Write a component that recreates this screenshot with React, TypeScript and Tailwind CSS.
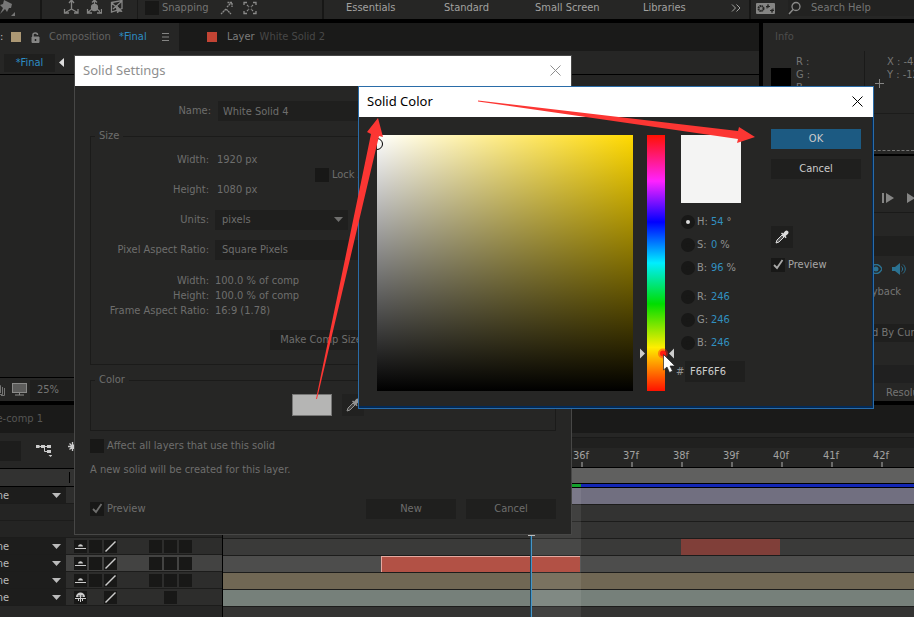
import type { ReactNode } from "react";

const UI_FONT = "font-['DejaVu_Sans_Condensed','DejaVu_Sans',sans-serif]";
const TITLE_FONT = "font-['Noto_Sans','Open_Sans',sans-serif]";

function Eyedropper() {
  return (
    <svg viewBox="0 0 14 14" className="h-3.5 w-3.5" aria-hidden="true">
      <path d="M1 13l1-3 5-5 2 2-5 5z" fill="#555" stroke="#ddd" strokeWidth="1" />
      <path d="M6 3.5l1-1 1.2 1L10 1.2C11 .3 12.300 .5 13 1.200c.7.7.8 1.900-.1 2.800L10.600 6l1 1.200-1 1z" fill="#ddd" />
    </svg>
  );
}

function CloseIcon({ color }: { color: string }) {
  return (
    <svg viewBox="0 0 11 11" className="h-[11px] w-[11px]" aria-hidden="true">
      <path d="M.5.5l10 10M10.500.5l-10 10" stroke={color} strokeWidth="1" fill="none" />
    </svg>
  );
}

function Check({ id, checked = false, label }: { id: string; checked?: boolean; label: string }) {
  return (
    <div className="flex items-center">
      <span className="relative flex h-3.5 w-3.5 shrink-0">
        <input
          id={id}
          type="checkbox"
          defaultChecked={checked}
          className="peer h-3.5 w-3.5 appearance-none bg-[#181817]"
        />
        <svg
          viewBox="0 0 14 14"
          className="pointer-events-none absolute inset-0 hidden h-3.5 w-3.5 peer-checked:block"
          aria-hidden="true"
        >
          <path d="M3 7l3 3 5.500-8" fill="none" stroke="currentColor" strokeWidth="1.800" />
        </svg>
      </span>
      <label htmlFor={id} className="ml-[3px] whitespace-nowrap">
        {label}
      </label>
    </div>
  );
}

function TopBar() {
  const spaces = [
    ["Essentials", "w-[98px]"],
    ["Standard", "w-[91px]"],
    ["Small Screen", "w-[108px]"],
    ["Libraries", "w-[88px]"],
  ];
  return (
    <header className="flex h-[19px] shrink-0 overflow-hidden bg-[#262625] text-[#a2a2a0]">
      <div className="flex w-[324px] shrink-0 border-r-2 border-[#171716]">
        <div className="w-[42px] shrink-0 border-r-2 border-[#171716]">
          <svg viewBox="0 0 16 16" className="h-4 w-4" aria-hidden="true">
            <path d="M4 0l8 4-1 4-2 0-2 4-2-3-5 5 3-6-3-3 3-1z" fill="#777" />
            <path d="M15 12v4h-4z" fill="#777" />
          </svg>
        </div>
        <div className="flex w-24 shrink-0 gap-[7px] border-r border-[#1a1a19] pl-[21px]">
          <svg viewBox="0 0 16 16" className="h-4 w-4 shrink-0" fill="none" stroke="#858584" strokeWidth="1.300" aria-hidden="true">
            <path d="M8.500 1v8l-6 3.500M8.500 9l6 3.500M6 3l2.500-3L11 3M1.500 9v4H6M15 9v4h-4" />
          </svg>
          <svg viewBox="0 0 16 16" className="h-4 w-4 shrink-0" fill="none" stroke="#858584" strokeWidth="1.300" aria-hidden="true">
            <path d="M8.500 0v5M6 9l-4 3.500M11 9l4 3.500M6 2.500L8.500 0 11 2.500M1.500 9v4H6M15.500 9v4H11" />
            <circle cx="8.500" cy="7.500" r="3" fill="#858584" />
          </svg>
          <svg viewBox="0 0 16 16" className="h-4 w-4 shrink-0" fill="none" stroke="#858584" aria-hidden="true">
            <path d="M2.500 2.500L13 .500v8L2.500 12zM3 3l8 8M13 1L4 9" strokeWidth="1.300" />
            <path d="M7 5l6 6.500-3-.500-1.500 2z" fill="#858584" />
          </svg>
        </div>
        <div className="flex h-4 items-center pl-[7px] text-[#757574]">
          <Check id="snapping" label="Snapping" />
          <svg viewBox="0 0 14 14" className="ml-2.5 h-3.5 w-3.5" fill="none" stroke="#8b8b8a" aria-hidden="true">
            <path d="M2 13l5-5 5 5M8 6l4-4M8.500 1.500H13V6" strokeDasharray="2 .5" strokeWidth="1.300" />
          </svg>
          <svg viewBox="0 0 14 14" className="ml-2.5 h-3.5 w-3.5" fill="none" stroke="#8b8b8a" aria-hidden="true">
            <path d="M1 4V1.500h3M10 1.500h3V4M1 10v2.500h3M10 12.500h3V10" strokeWidth="1.300" />
            <path d="M4 4l2 2M10 4L8 6M4 10l2-2M10 10L8 8" strokeDasharray="1.500 .5" strokeWidth="1.300" />
          </svg>
        </div>
      </div>
      <nav className="flex h-4 min-w-0 flex-1 items-center pl-[22px]">
        {spaces.map(([name, width]) => (
          <button key={name} className={`${width} shrink-0 whitespace-nowrap text-left`}>
            {name}
          </button>
        ))}
        <svg viewBox="0 0 10 8" className="h-2 w-2.5" fill="none" stroke="#a2a2a0" aria-hidden="true">
          <path d="M1 .5L4.500 4 1 7.500M5.500.5L9 4 5.500 7.500" />
        </svg>
      </nav>
      <div className="flex h-[19px] w-[165px] shrink-0 items-center border-l-2 border-[#171716] pl-[5px]">
        <svg viewBox="0 0 19 11" className="-mt-[3px] h-[11px] w-[19px] shrink-0" aria-hidden="true">
          <rect width="19" height="11" rx="1" fill="#858584" />
          <circle cx="5" cy="5.500" r="2.500" fill="none" stroke="#262625" strokeWidth="2" strokeDasharray="1.500 .5" />
          <path d="M11 5.500V3h2M17 5.500V8h-2M10 3.500h4M14 7.500h4M12 1v4M16 6v4" stroke="#262625" fill="none" />
        </svg>
        <div className="ml-[13px] flex h-4 flex-1 items-center self-start bg-[#222221]">
          <svg viewBox="0 0 14 14" className="h-3.5 w-3.5 shrink-0" fill="none" stroke="#8b8b8a" aria-hidden="true">
            <circle cx="8" cy="5.500" r="4" strokeWidth="1.300" />
            <path d="M5 8.500l-4 4.500" strokeWidth="1.500" />
          </svg>
          <input
            aria-label="Search Help"
            placeholder="Search Help"
            className="ml-[9px] w-full min-w-0 bg-transparent outline-none placeholder:text-[#757574]"
          />
        </div>
      </div>
    </header>
  );
}

function CompositionPanel() {
  return (
    <section className="flex min-w-0 flex-1 flex-col bg-[#262625]">
      <div className="flex h-7 shrink-0 bg-[#1a1a19]">
        <div className="flex w-[179px] shrink-0 items-center bg-[#262625]">
          <span className="w-[11px] text-[#bbb]">:</span>
          <span className="h-2.5 w-2.5 bg-[#ac9874]" />
          <svg viewBox="0 0 10 11" className="ml-2.5 h-[11px] w-2.5" fill="none" stroke="#858584" aria-hidden="true">
            <path d="M2 5V2.500C2 .5 6.500.5 6.500 3" strokeWidth="1.500" />
            <path d="M1 5h7v5.500H1z" fill="#858584" />
            <path d="M4.500 7v2" stroke="#222" strokeWidth="1.500" />
          </svg>
          <span className="ml-2 w-[66px] text-[#636362]">Composition</span>
          <span className="ml-1 text-[#2d8cc4]">*Final</span>
          <svg viewBox="0 0 7 8" className="ml-[15px] h-2 w-[7px]" stroke="#858584" aria-hidden="true">
            <path d="M0 .5h7M0 4h7M0 7.500h7" />
          </svg>
        </div>
        <div className="flex items-center pl-7">
          <span className="h-2.5 w-2.5 bg-[#c34434]" />
          <span className="ml-2.5 text-[#7c7c7b]">Layer</span>
          <span className="ml-[5px] text-[#484847]">White Solid 2</span>
        </div>
      </div>
      <div className="flex h-6 shrink-0 items-center border-b border-black pl-1">
        <button className="h-[18px] w-[51px] bg-[#1f1f1e] text-[#2d8cc4]">*Final</button>
        <svg viewBox="0 0 5 9" className="ml-1 h-[9px] w-[5px]" fill="#ddd" aria-hidden="true">
          <path d="M5 0v9L0 4.500z" />
        </svg>
      </div>
      <div className="flex-1 bg-[#242423]" />
      <div className="flex h-6 shrink-0 items-center border-t border-black">
        <svg viewBox="0 0 5 12" className="h-3 w-[5px]" fill="none" stroke="#757574" aria-hidden="true">
          <path d="M0 1.500h.5V9M2.500 3v7.500H0M4.500 4v7.500H1" />
        </svg>
        <svg viewBox="0 0 15 13" className="ml-[7px] h-[13px] w-[15px]" aria-hidden="true">
          <rect x=".5" y=".5" width="14" height="9" fill="#5d5d5c" stroke="#8b8b8a" />
          <path d="M3 12h9M7.500 10v2" stroke="#8b8b8a" />
        </svg>
        <button className="ml-[3px] h-5 flex-1 bg-[#1f1f1e] pl-[7px] text-left text-[#757574]">25%</button>
      </div>
    </section>
  );
}

function SidePanels() {
  return (
    <aside className="flex w-[151px] shrink-0 flex-col overflow-hidden bg-[#262625] text-[#757574]">
      <div className="flex h-[131px] shrink-0 flex-col">
        <div className="flex h-7 items-center pl-3 text-[#4d4d4c]">Info</div>
        <div className="flex h-[63px] border-b border-[#1c1c1b]">
          <div className="ml-2 mt-[17px] h-5 w-5 shrink-0 bg-black" />
          <div className="ml-[5px] w-[69px] shrink-0 border-r border-[#1a1a19] pt-1 leading-[13px]">
            <p>R :</p>
            <p>G :</p>
            <p>B :</p>
          </div>
          <svg viewBox="0 0 9 9" className="ml-2.5 mt-7 h-[9px] w-[9px] shrink-0" stroke="#858584" aria-hidden="true">
            <path d="M4.500 0v9M0 4.500h9" />
          </svg>
          <div className="ml-[3px] shrink-0 pt-1 leading-[13px]">
            <p>X : -42</p>
            <p>Y : -12</p>
          </div>
        </div>
        <div className="mt-9 ml-[110px] border-t border-dashed border-[#757574]" />
      </div>
      <div className="flex h-[59px] shrink-0 items-center gap-3 border-b border-t-2 border-[#1a1a19] border-t-black pl-[119px] pt-7">
        <svg viewBox="0 0 12 10" className="h-2.5 w-3 shrink-0" fill="#858584" aria-hidden="true">
          <path d="M0 0h2v10H0zM4 0l8 5-8 5z" />
        </svg>
        <svg viewBox="0 0 12 10" className="h-2.5 w-3 shrink-0" fill="#858584" aria-hidden="true">
          <path d="M1 0l8 5-8 5zM10 0h2v10h-2z" />
        </svg>
      </div>
      <div className="mt-[23px] h-5 shrink-0 bg-[#1f1f1e]" />
      <div className="mt-1.5 flex h-[14px] shrink-0 items-center gap-2.5 pl-[107px] text-[#2b7292]">
        <svg viewBox="0 0 12 10" className="h-2.5 w-3" aria-hidden="true">
          <path d="M0 5c3-6 9-6 12 0-3 6-9 6-12 0z" fill="none" stroke="currentColor" strokeWidth="1.500" />
          <circle cx="6" cy="5" r="2.500" fill="currentColor" />
        </svg>
        <svg viewBox="0 0 14 12" className="h-3 w-3.5" aria-hidden="true">
          <path d="M0 4h3l5-4v12L3 8H0z" fill="currentColor" />
          <path d="M9.500 3.500c1.500 1.500 1.500 3.500 0 5M11 1.500c3 2.500 3 6.500 0 9" fill="none" stroke="currentColor" />
        </svg>
      </div>
      <p className="mt-2 h-4 shrink-0 whitespace-nowrap pl-[60px] leading-4">Cache Playback</p>
      <button className="mt-6 h-[18px] shrink-0 overflow-hidden whitespace-nowrap bg-[#1f1f1e] pl-[74px] text-left">
        Affected By Current
      </button>
      <div className="mt-[23px] h-[18px] shrink-0 bg-[#202020]" />
      <p className="flex-1 overflow-hidden whitespace-nowrap pl-[123px] leading-[20px]">Resolution</p>
    </aside>
  );
}

function DownTriangle() {
  return (
    <svg viewBox="0 0 9 5" className="h-[5px] w-[9px] shrink-0" fill="currentColor" aria-hidden="true">
      <path d="M0 0h9L4.500 5z" />
    </svg>
  );
}

function Cell({ children }: { children?: ReactNode }) {
  return <span className="flex h-[13px] w-[13px] items-center justify-center bg-[#181817]">{children}</span>;
}

function Slash() {
  return (
    <svg viewBox="0 0 13 13" className="h-[13px] w-[13px]" aria-hidden="true">
      <path d="M1.500 11.500l10-10" stroke="#ccc" strokeWidth="1.500" />
    </svg>
  );
}

function Shy() {
  return (
    <svg viewBox="0 0 11 7" className="h-[7px] w-[11px]" aria-hidden="true">
      <path d="M3 3.500C3.500.5 7.500.5 8 3.500z" fill="#ccc" />
      <path d="M0 5.500h11" stroke="#ccc" />
    </svg>
  );
}

function ShyOpen() {
  return (
    <svg viewBox="0 0 11 10" className="h-2.5 w-[11px]" aria-hidden="true">
      <path d="M1 5c0-6 9-6 9 0z" fill="#ccc" />
      <path d="M0 6.500h11M5.500 2v8M3.500 6v3M7.500 6v3" stroke="#ccc" />
      <path d="M4 3v2M7 3v2" stroke="#222" />
    </svg>
  );
}

type LayerKind = "dropdown" | "blank" | "full" | "selected" | "camera";

function LayerControls({ kind }: { kind: LayerKind }) {
  if (kind === "blank") {
    return <div className="h-[17px] shrink-0 border-b border-[#1c1c1b] bg-[#242423]" />;
  }
  const bg = kind === "selected" ? "bg-[#434342]" : "bg-[#2d2d2c]";
  return (
    <div className={`flex h-[17px] shrink-0 border-b border-[#1c1c1b] ${bg}`}>
      <button className="flex w-[66px] shrink-0 items-center justify-between bg-[#1d1d1c] pr-[5px] pt-px text-[#bbb]">
        <span className="flex w-[9px] justify-end overflow-hidden">
          <span>None</span>
        </span>
        <DownTriangle />
      </button>
      {kind !== "dropdown" && (
        <div className="flex items-center pl-2">
          <Cell>{kind === "camera" ? <ShyOpen /> : <Shy />}</Cell>
          <span className={kind === "camera" ? "ml-0.5 w-[13px]" : "ml-0.5"}>{kind !== "camera" && <Cell />}</span>
          <span className="ml-0.5">
            <Cell>
              <Slash />
            </Cell>
          </span>
          {kind === "camera" ? (
            <span className="ml-[47px]">
              <Cell />
            </span>
          ) : (
            <span className="ml-8 flex gap-0.5">
              <Cell />
              <Cell />
              <Cell />
            </span>
          )}
        </div>
      )}
    </div>
  );
}

function Timeline() {
  const frames = ["30f", "31f", "32f", "33f", "34f", "35f", "36f", "37f", "38f", "39f", "40f", "41f", "42f"];
  const line = "h-[17px] shrink-0 border-b border-[#1c1c1b]";
  return (
    <section className="isolate flex min-h-0 flex-1 flex-col bg-[#262625]">
      <div className="flex h-7 shrink-0 items-center bg-[#1a1a19] text-[#555554]">
        <span className="flex w-[43px] justify-end overflow-hidden whitespace-nowrap">Pre-comp 1</span>
      </div>
      <div className="flex min-h-0 flex-1">
        <div className="flex w-[223px] shrink-0 flex-col border-r border-black">
          <div className="flex h-9 shrink-0 items-center border-b border-black">
            <input aria-label="Search layers" className="h-5 w-[21px] bg-[#1d1d1c]" />
            <svg viewBox="0 0 16 13" className="ml-[15px] h-[13px] w-4" fill="#ccc" aria-hidden="true">
              <path d="M0 1h3.500v3H0zM5 1h4v3H5zM11 1h4v3h-4zM11 6h4v3h-4zM12.500 11h4l-2 2z" />
              <path d="M3 2.500h9M8.500 3v4.500H12" stroke="#ccc" fill="none" />
            </svg>
            <svg viewBox="0 0 9 9" className="-mt-2 ml-4 h-[9px] w-[9px]" stroke="#ccc" strokeWidth="1.300" aria-hidden="true">
              <path d="M4.500 0v9M0 4.500h9M1.500 1.500l6 6M7.500 1.500l-6 6" />
            </svg>
          </div>
          <div className="flex h-[18px] shrink-0 items-center border-b border-black bg-[#323231]">
            <span className="ml-[69px] h-[11px] border-l border-black" />
          </div>
          <LayerControls kind="dropdown" />
          <LayerControls kind="blank" />
          <LayerControls kind="blank" />
          <LayerControls kind="full" />
          <LayerControls kind="selected" />
          <LayerControls kind="full" />
          <LayerControls kind="camera" />
        </div>
        <div className="relative flex min-w-0 flex-1 flex-col overflow-hidden bg-[#333332]">
          <div className="h-[5px] shrink-0 border-b border-[#1a1a19] bg-[#262625]" />
          <div className="h-2.5 shrink-0 bg-[#20201f]" />
          <div className="flex h-5 shrink-0 border-b border-black bg-[#262625] pl-[33px] text-[#a2a2a0]">
            {frames.map((f) => (
              <div key={f} className="flex w-[50px] shrink-0 flex-col items-center">
                <span className="h-3.5 leading-[15px]">{f}</span>
                <span className="ml-0.5 h-[5px] w-0.5 bg-[#6b6b6a]" />
              </div>
            ))}
          </div>
          <div className="h-[15px] shrink-0 bg-[#60605f]" />
          <div className="flex h-[5px] shrink-0 border-y border-black">
            <span className="w-[358px] bg-[#14a02c]" />
            <span className="flex-1 bg-[#1226b5]" />
          </div>
          <div className={`${line} bg-[#716f80]`} />
          <div className={`${line} bg-[#333332]`} />
          <div className={`${line} bg-[#333332]`} />
          <div className={`${line} bg-[#3a3a39] pl-[458px]`}>
            <div className="h-4 w-[99px] bg-[#803f39]" />
          </div>
          <div className={`${line} bg-[#4d4d4c] pl-[158px]`}>
            <div className="relative z-10 h-4 w-[199px] border-l border-t border-[#e5a9a0] bg-[#b25145]" />
          </div>
          <div className={`${line} bg-[#706754]`} />
          <div className={`${line} bg-[#76807a]`} />
          <div className="pointer-events-none absolute bottom-0 left-[309px] top-[55px] w-[49px] bg-white/[0.07]" />
          <div className="pointer-events-none absolute bottom-0 left-[307px] top-4 z-20 w-0.5 border-l border-[#1c4864] bg-[#4596c8]" />
          <div className="pointer-events-none absolute left-[305px] top-[102px] z-20 h-px w-[7px] bg-[#bbb]" />
        </div>
      </div>
    </section>
  );
}

function SolidSettings() {
  const select = "h-5 w-full appearance-none bg-[#1f1f1e] pl-[7px]";
  const plain = "w-full bg-transparent pl-0.5 outline-none";
  return (
    <div
      role="dialog"
      aria-label="Solid Settings"
      className="absolute left-[74px] top-[55px] w-[498px] border border-[#474746] bg-[#262625] text-[#6e6e6d]"
    >
      <div className="flex h-[30px] items-center justify-between bg-white pb-0.5 pl-2 pr-2.5">
        <h2 className={`${TITLE_FONT} text-[13px] text-[#8f8f8f]`}>Solid Settings</h2>
        <button aria-label="Close">
          <CloseIcon color="#8f8f8f" />
        </button>
      </div>
      <div className="px-[15px] pb-[15px] pt-[15px]">
        <div className="flex items-center">
          <label htmlFor="name" className="w-[121px] text-right">
            Name:
          </label>
          <input id="name" defaultValue="White Solid 4" className="ml-[7px] h-5 min-w-0 flex-1 bg-[#1f1f1e] px-[5px] outline-none" />
        </div>
        <fieldset className="mt-2 border border-[#1b1b1a] pb-3.5">
          <legend className="ml-1 h-3.5 px-1 leading-[14px]">Size</legend>
          <div className="mt-0.5 grid grid-cols-[118px_133px_1fr] auto-rows-[30px] items-center gap-x-[6px]">
            <label htmlFor="width" className="col-start-1 text-right">
              Width:
            </label>
            <div className="flex">
              <input id="width" defaultValue="1920 px" className={plain} />
            </div>
            <label htmlFor="height" className="col-start-1 text-right">
              Height:
            </label>
            <div className="flex">
              <input id="height" defaultValue="1080 px" className={plain} />
            </div>
            <div className="col-start-3 row-span-2 row-start-1 -ml-[39px]">
              <Check id="lock" label="Lock Aspect Ratio" />
            </div>
            <label htmlFor="units" className="col-start-1 text-right">
              Units:
            </label>
            <div className="relative">
              <select id="units" className={select}>
                <option>pixels</option>
              </select>
              <span className="pointer-events-none absolute right-[5px] top-[7px]">
                <DownTriangle />
              </span>
            </div>
            <label htmlFor="par" className="col-start-1 whitespace-nowrap text-right">
              Pixel Aspect Ratio:
            </label>
            <div className="col-span-2 w-[240px]">
              <select id="par" className={select}>
                <option>Square Pixels</option>
              </select>
            </div>
          </div>
          <dl className="mt-2 grid grid-cols-[118px_1fr] gap-x-[6px] leading-[15px]">
            <dt className="text-right">Width:</dt>
            <dd>100.0 % of comp</dd>
            <dt className="text-right">Height:</dt>
            <dd>100.0 % of comp</dd>
            <dt className="whitespace-nowrap text-right">Frame Aspect Ratio:</dt>
            <dd>16:9 (1.78)</dd>
          </dl>
          <button className="ml-[179px] mt-3 block h-5 w-[102px] bg-[#1f1f1e]">Make Comp Size</button>
        </fieldset>
        <fieldset className="mt-2 border border-[#1b1b1a] pb-3.5">
          <legend className="ml-1 h-3.5 px-1 leading-[14px]">Color</legend>
          <div className="flex gap-2.5 pl-[201px] pt-[7px]">
            <button aria-label="Solid color" className="h-[22px] w-10 border border-[#777776] bg-[#b5b5b4]" />
            <button aria-label="Pick color" className="flex h-[22px] w-[22px] items-center justify-center bg-[#1f1f1e] opacity-60">
              <Eyedropper />
            </button>
          </div>
        </fieldset>
        <div className="mt-[7px]">
          <Check id="affect" label="Affect all layers that use this solid" />
        </div>
        <p className="mt-2 leading-4">A new solid will be created for this layer.</p>
        <div className="mt-[21px] flex items-center">
          <Check id="preview-settings" checked label="Preview" />
          <button className="ml-auto h-5 w-[90px] bg-[#1f1f1e]">New</button>
          <button className="ml-2.5 h-5 w-[90px] bg-[#1f1f1e]">Cancel</button>
        </div>
      </div>
    </div>
  );
}

function Channel({ name, value, unit, checked = false }: { name: string; value: string; unit?: string; checked?: boolean }) {
  const id = `channel-${name}-${unit ?? "rgb"}`;
  return (
    <div className="flex h-[23px] items-center pl-[5px]">
      <input
        id={id}
        type="radio"
        name="channel"
        defaultChecked={checked}
        className="h-3.5 w-3.5 appearance-none rounded-full border-[5px] border-[#181817] bg-[#181817] checked:bg-[#ddd]"
      />
      <label htmlFor={id} className="ml-0.5 w-3.5">
        {name}:
      </label>
      <span className="text-[#3190c0]">{value}</span>
      <span className="ml-[3px]">{unit}</span>
    </div>
  );
}

function SolidColor() {
  return (
    <div
      role="dialog"
      aria-label="Solid Color"
      className="absolute left-[358px] top-[86px] w-[516px] border border-[#2a6ca8] bg-[#262625] text-[#929291]"
    >
      <div className="flex h-[30px] items-center justify-between bg-white pb-0.5 pl-2 pr-2.5">
        <h2 className={`${TITLE_FONT} text-[13px] text-black`}>Solid Color</h2>
        <button aria-label="Close">
          <CloseIcon color="#000000" />
        </button>
      </div>
      <div className="flex border-b-2 border-r border-[#022a58] pb-[15px] pl-[18px] pr-[11px] pt-3">
        <div className="relative mt-1.5 h-64 w-64 overflow-hidden bg-[linear-gradient(to_top,#000,transparent),linear-gradient(to_right,#fff,#ffd900)]">
          <span className="absolute -left-1.5 top-[3px] h-3 w-3 rounded-full border border-black" />
        </div>
        <div className="relative ml-3.5 mt-1.5 h-64 w-[18px] bg-[linear-gradient(to_bottom,#f10,#f2f_18%,#00f_34%,#0ef_50%,#0d0_66%,#fe0_83%,#f10)]">
          <svg viewBox="0 0 40 24" className="absolute -left-2 top-[210px] h-6 w-10" aria-hidden="true">
            <path d="M1 3.500v10l5-5zM35 3.500v10l-5-5z" fill="#ccc" />
            <circle cx="24" cy="8.500" r="5" fill="#ff2010" opacity=".45" />
            <circle cx="24" cy="8.500" r="3" fill="#ff1c10" />
          </svg>
        </div>
        <div className="ml-[11px] w-[95px]">
          <div className="ml-[5px] mt-1.5 h-[68px] w-[60px] bg-[#f4f4f3]" />
          <div className="mt-[7px]">
            <Channel name="H" value="54" unit="°" checked />
            <Channel name="S" value="0" unit="%" />
            <Channel name="B" value="96" unit="%" />
          </div>
          <div className="mt-1.5">
            <Channel name="R" value="246" />
            <Channel name="G" value="246" />
            <Channel name="B" value="246" />
          </div>
          <div className="mt-[7px] flex items-center">
            <label htmlFor="hex" className="w-[9px]">
              #
            </label>
            <input id="hex" defaultValue="F6F6F6" className="h-[21px] w-[60px] bg-[#1f1f1e] pl-[5px] text-[#ccc] outline-none" />
          </div>
        </div>
        <div className="w-[90px]">
          <button className="block h-5 w-full bg-[#1c5a82] text-[#ccc]">OK</button>
          <button className="mt-2.5 block h-5 w-full bg-[#1f1f1e] text-[#ccc]">Cancel</button>
          <button aria-label="Pick color" className="mt-[47px] flex h-[22px] w-[22px] items-center justify-center bg-[#1f1f1e]">
            <Eyedropper />
          </button>
          <div className="mt-[9px] text-[#a8a8a7]">
            <Check id="preview-color" checked label="Preview" />
          </div>
        </div>
      </div>
    </div>
  );
}

function Annotations() {
  return (
    <svg viewBox="0 0 914 617" className="pointer-events-none absolute left-0 top-0 h-[617px] w-[914px]" aria-hidden="true">
      <g fill="#fc3633">
        <path d="M316 399L371 134l-4-2 11-14 5 19-4-1-62 263z" />
        <path d="M478 100.500l260 30.500 1-4 16 10-18 6 1-4-260-37.500z" />
      </g>
      <path d="M663.500 354.500v15.500l3.500-3 2.500 5.500 3-1.500-2.500-5h5z" fill="#fff" stroke="#222" strokeWidth=".7" />
    </svg>
  );
}

export default function App() {
  return (
    <div className={`relative flex h-screen flex-col overflow-hidden bg-black text-[11px] leading-4 ${UI_FONT}`}>
      <TopBar />
      <main className="mt-1 flex h-[378px] shrink-0 gap-1">
        <CompositionPanel />
        <SidePanels />
      </main>
      <div className="h-1 shrink-0" />
      <Timeline />
      <SolidSettings />
      <SolidColor />
      <Annotations />
    </div>
  );
}
